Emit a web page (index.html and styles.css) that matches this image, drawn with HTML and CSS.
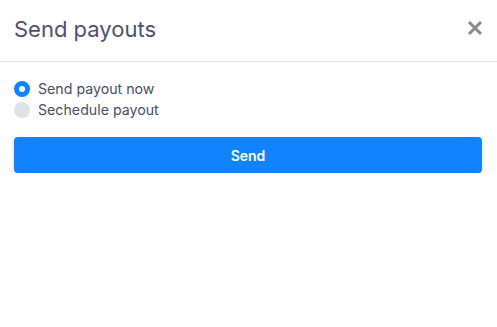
FILE: index.html
```html
<!DOCTYPE html>
<html lang="en">
  <head>
    <meta charset="UTF-8" />
    <meta name="viewport" content="width=device-width, initial-scale=1.0" />
    <title>Send payouts</title>
    <link rel="stylesheet" href="styles.css">
  </head>
  <body>
    <div class="modal">
      <div class="modal-header">
        <h1 class="title">Send payouts</h1>
        <a class="close" href="javascript:" aria-label="Close">
          <svg width="16" height="16" viewBox="0 0 16 16">
            <path d="M2 2 L14 14 M14 2 L2 14" stroke="#8a8a8a" stroke-width="3" stroke-linecap="butt" />
          </svg>
        </a>
      </div>
      <form class="modal-body">
        <label class="option">
          <input type="radio" name="when" value="now" checked />
          <span class="dot"></span>
          Send payout now
        </label>
        <label class="option">
          <input type="radio" name="when" value="later" />
          <span class="dot"></span>
          Sechedule payout
        </label>
        <button class="send" type="button">Send</button>
      </form>
    </div>
  </body>
</html>
```

FILE: styles.css
```css
* {
  margin: 0;
  padding: 0;
  box-sizing: border-box;
}

body {
  background: #fff;
  font-family: Inter, "Liberation Sans", Arial, sans-serif;
  color: #4b4d6d;
}

.modal-header {
  height: 62px;
  padding: 0 14px 3px 14px;
  display: flex;
  align-items: center;
  justify-content: space-between;
  border-bottom: 1px solid #e6e6e6;
}

.title {
  font-size: 22px;
  font-weight: 400;
  color: #4e5073;
}

.close {
  display: flex;
  margin-top: -2px;
}

.modal-body {
  padding: 16px 15px 0 14px;
}

.option {
  display: flex;
  align-items: center;
  height: 21px;
  font-size: 14.2px;
  color: #4a4c6a;
  cursor: pointer;
}

.option input {
  display: none;
}

.dot {
  width: 16px;
  height: 16px;
  border-radius: 50%;
  background: #dfe2e6;
  margin-right: 8px;
}

.option input:checked + .dot {
  background: #fff;
  border: 5px solid #1283ff;
}

.send {
  display: block;
  width: 100%;
  height: 36px;
  margin-top: 17px;
  border: 0;
  border-radius: 4px;
  background: #1283ff;
  color: #fff;
  font-family: Inter, "Liberation Sans", Arial, sans-serif;
  font-size: 14px;
  font-weight: 600;
  box-shadow: 0 2px 5px rgba(0, 0, 0, 0.15);
  cursor: pointer;
}
```
